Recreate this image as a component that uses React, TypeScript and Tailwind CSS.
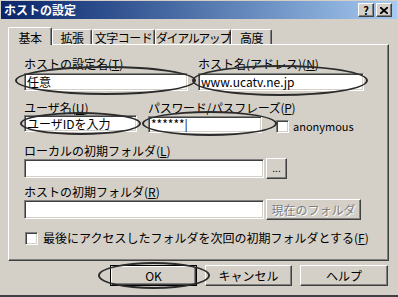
import React from "react";

const face = "bg-[#d4d0c8]";
const sunken =
  "bg-white border border-t-[#808080] border-l-[#808080] border-r-white border-b-white shadow-[inset_1px_1px_0_#404040,inset_-1px_-1px_0_#d4d0c8]";
const raised =
  "bg-[#d4d0c8] border border-t-white border-l-white border-r-[#404040] border-b-[#404040] shadow-[inset_-1px_-1px_0_#808080]";

interface TabItem {
  label: string;
  width: string;
  active?: boolean;
  tight?: boolean;
}

const tabs: TabItem[] = [
  { label: "基本", width: "w-[44px]", active: true },
  { label: "拡張", width: "w-[40px]" },
  { label: "文字コード", width: "w-[63px]" },
  { label: "ダイアルアップ", width: "w-[76px]", tight: true },
  { label: "高度", width: "w-[41px]" },
];

const Ellipse = ({ className }: { className: string }) => (
  <div
    className={`absolute rounded-[50%] border-2 border-[#2b2b2b] pointer-events-none ${className}`}
  />
);

const Input = ({ className, value }: { className: string; value?: string }) => (
  <div className={`${sunken} ${className} flex items-center pl-[2px] text-[12px] leading-[14px] overflow-hidden whitespace-nowrap`}>
    {value}
  </div>
);

const Check = () => <div className={`${sunken} w-[13px] h-[13px] shrink-0`} />;

const App: React.FC = () => {
  return (
    <div
      className={`relative w-[398px] h-[297px] ${face} p-[1px] flex flex-col overflow-hidden text-black border-b-2 border-b-[#404040]`}
      style={{ fontFamily: "'Noto Sans CJK JP', 'Noto Sans', sans-serif" }}
    >
      {/* title bar */}
      <div className="h-[18px] flex items-center justify-between bg-linear-to-r from-[#0a246a] to-[#a6caf0] pl-[3px] pr-[5px]">
        <span className="text-white font-bold text-[12px] leading-[14px]">ホストの設定</span>
        <div className="flex gap-[2px]">
          <div className={`${raised} w-[16px] h-[14px] flex items-center justify-center text-[11px] font-bold leading-none`}>?</div>
          <div className={`${raised} w-[16px] h-[14px] flex items-center justify-center`}>
            <svg width="8" height="7" viewBox="0 0 8 7">
              <path d="M0 0 L8 7 M8 0 L0 7" stroke="#000" strokeWidth="1.8" />
            </svg>
          </div>
        </div>
      </div>

      {/* tabs */}
      <div className="mt-[8px] pl-[7px] h-[17px] flex items-end relative z-10">
        {tabs.map((t) => (
          <div
            key={t.label}
            className={`${t.width} ${face} flex justify-center whitespace-nowrap text-[12px] leading-[14px] border-t border-l border-white border-r border-r-[#404040] rounded-t-[2px] shadow-[inset_-1px_0_0_#808080] ${
              t.tight ? "tracking-[-1.4px]" : "tracking-[-0.5px]"
            } ${t.active ? "h-[18px] -mb-[1px] pt-[3px]" : "h-[15px] pt-[1px]"}`}
          >
            {t.label}
          </div>
        ))}
      </div>

      {/* panel */}
      <div className="ml-[7px] w-[381px] h-[217px] border border-t-white border-l-white border-r-[#404040] border-b-[#404040] shadow-[inset_-1px_-1px_0_#808080] px-[15px] pt-[12px] text-[12px] leading-[14px] flex flex-col">
        <div className="flex">
          <div className="w-[174px] flex flex-col">
            <span>ホストの設定名(<u>T</u>)</span>
            <Input className="mt-[2px] w-[164px] h-[18px]" value="任意" />
          </div>
          <div className="flex flex-col">
            <span>ホスト名(アドレス)(<u>N</u>)</span>
            <Input className="mt-[2px] w-[166px] h-[18px]" value="www.ucatv.ne.jp" />
          </div>
        </div>

        <div className="flex mt-[10px]">
          <div className="w-[124px] flex flex-col">
            <span>ユーザ名(<u>U</u>)</span>
            <Input className="w-[113px] h-[17px]" value="ユーザIDを入力" />
          </div>
          <div className="flex flex-col">
            <span className="tracking-[-0.3px]">パスワード/パスフレーズ(<u>P</u>)</span>
            <div className="flex items-center">
              <Input className="w-[114px] h-[17px]" value="******|" />
              <div className="ml-[14px] mt-[4px] flex items-center gap-[4px]">
                <Check />
                <span className="text-[11px]">anonymous</span>
              </div>
            </div>
          </div>
        </div>

        <span className="mt-[11px]">ローカルの初期フォルダ(<u>L</u>)</span>
        <div className="flex items-center gap-[2px]">
          <Input className="w-[240px] h-[19px]" />
          <div className={`${raised} w-[21px] h-[21px] flex items-center justify-center text-[10px] leading-none pb-[2px]`}>...</div>
        </div>

        <span className="mt-[6px]">ホストの初期フォルダ(<u>R</u>)</span>
        <div className="flex items-center gap-[2px]">
          <Input className="w-[240px] h-[19px]" />
          <div className={`${raised} w-[95px] h-[21px] flex items-center justify-center text-[#808080] [text-shadow:1px_1px_0_#fff]`}>
            現在のフォルダ
          </div>
        </div>

        <div className="mt-[11px] flex items-center gap-[5px] pl-[1px]">
          <Check />
          <span>最後にアクセスしたフォルダを次回の初期フォルダとする(<u>F</u>)</span>
        </div>
      </div>

      {/* buttons */}
      <div className="mt-[4px] pl-[109px] flex gap-[8px] text-[12px] leading-[14px]">
        <div className="w-[87px] h-[21px] border border-black flex">
          <div className="flex-1 flex items-center justify-center bg-[#d4d0c8] shadow-[inset_1px_1px_0_#fff,inset_-1px_-1px_0_#404040,inset_-2px_-2px_0_#808080]">
            OK
          </div>
        </div>
        <div className={`${raised} w-[87px] h-[21px] flex items-center justify-center`}>キャンセル</div>
        <div className={`${raised} w-[88px] h-[21px] flex items-center justify-center`}>ヘルプ</div>
      </div>

      {/* annotation ellipses */}
      <Ellipse className="left-[15px] top-[66px] w-[181px] h-[29px]" />
      <Ellipse className="left-[192px] top-[65px] w-[176px] h-[31px]" />
      <Ellipse className="left-[20px] top-[112px] w-[121px] h-[23px]" />
      <Ellipse className="left-[142px] top-[111px] w-[135px] h-[25px]" />
      <Ellipse className="left-[98px] top-[262px] w-[112px] h-[27px]" />
    </div>
  );
};

export default App;
